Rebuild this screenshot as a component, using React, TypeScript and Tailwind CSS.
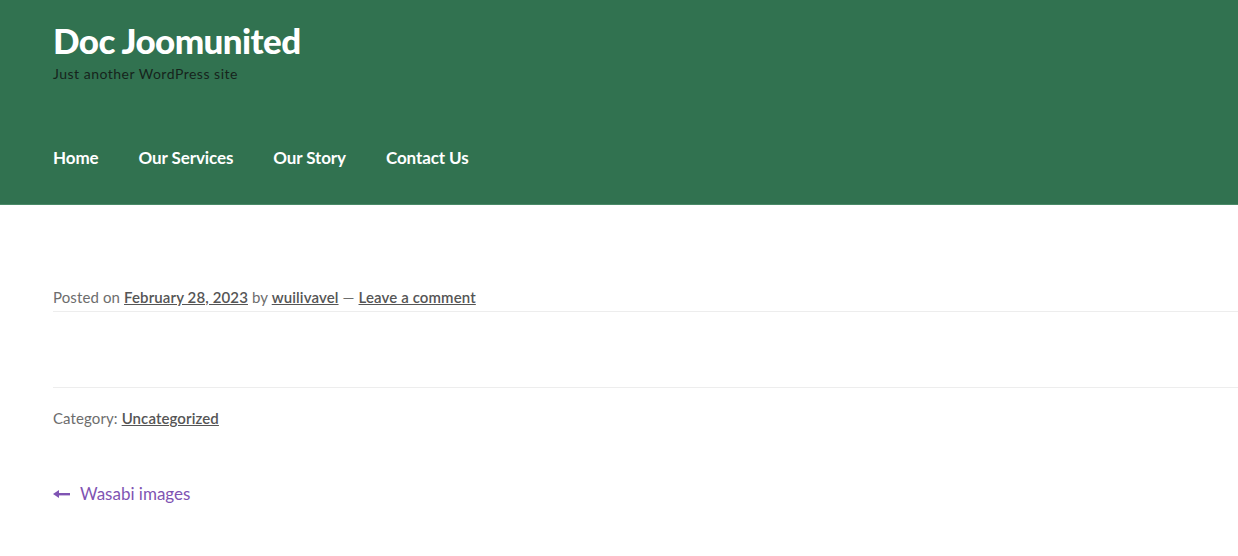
const navItems = ["Home", "Our Services", "Our Story", "Contact Us"];

const ArrowLeft = () => (
  <svg width="17" height="8" viewBox="0 0 17 8" className="shrink-0">
    <polygon points="0,4 6,0 6,8" fill="#7f54b3" />
    <rect x="5" y="3" width="12" height="2.4" fill="#7f54b3" />
  </svg>
);

const App = () => {
  return (
    <div
      className="min-h-screen w-full bg-white"
      style={{ fontFamily: "Lato, 'Noto Sans', sans-serif" }}
    >
      {/* Site header */}
      <header className="bg-[#317250] border-b border-[#4a8a68]">
        <div className="pl-[53px] pt-[20px]">
          <h1 className="text-[35px] font-black leading-[40px] tracking-[-0.6px] text-white">
            Doc Joomunited
          </h1>
          <p className="mt-[5px] text-[14px] leading-[18px] tracking-[0.5px] text-[#16241c]">
            Just another WordPress site
          </p>
          <nav className="flex gap-[40px] pt-[65px] pb-[36px]">
            {navItems.map((item) => (
              <a
                key={item}
                href="#"
                className="text-[17px] font-bold leading-[20px] tracking-[-0.1px] text-white"
              >
                {item}
              </a>
            ))}
          </nav>
        </div>
      </header>

      {/* Post */}
      <main className="pl-[53px] pt-[82px]">
        <div className="border-b border-[#ededed] pb-[4px] text-[15px] leading-[20px] tracking-[0.12px] text-[#6d6d6d]">
          Posted on{" "}
          <a href="#" className="font-semibold text-[#555] underline">
            February 28, 2023
          </a>{" "}
          by{" "}
          <a href="#" className="font-semibold text-[#555] underline">
            wuilivavel
          </a>{" "}
          —{" "}
          <a href="#" className="font-semibold text-[#555] underline">
            Leave a comment
          </a>
        </div>

        <div className="mt-[75px] border-t border-[#ededed] pt-[20px] text-[15px] leading-[20px] tracking-[0.1px] text-[#6d6d6d]">
          Category:{" "}
          <a href="#" className="font-semibold text-[#555] underline">
            Uncategorized
          </a>
        </div>

        <a
          href="#"
          className="mt-[55px] flex items-center gap-[10px] text-[17px] leading-[22px] text-[#7f54b3]"
        >
          <ArrowLeft />
          Wasabi images
        </a>
      </main>
    </div>
  );
};

export default App;
